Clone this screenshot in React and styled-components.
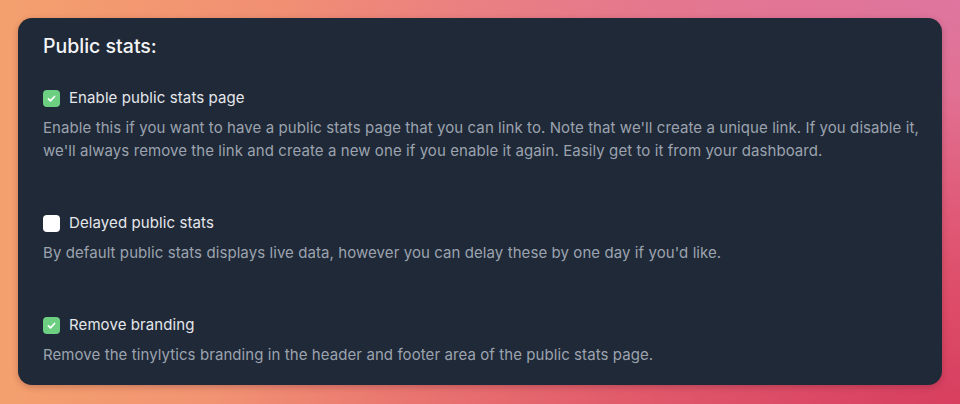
import React, { useState } from "react";
import styled, { createGlobalStyle } from "styled-components";

const GlobalStyle = createGlobalStyle`
  html, body {
    margin: 0;
    padding: 0;
  }
  body {
    font-family: Inter, "Noto Sans", sans-serif;
    background:
      radial-gradient(ellipse at 100% 100%, rgba(214, 58, 92, 0.9), rgba(214, 58, 92, 0) 55%),
      radial-gradient(ellipse at 100% 0%, rgba(222, 118, 160, 0.95), rgba(222, 118, 160, 0) 50%),
      linear-gradient(90deg, #f4a06e 0%, #ef8676 45%, #e7687e 100%);
    min-height: 404px;
  }
`;

const Page = styled.div`
  padding: 18px 18px 19px 18px;
`;

const Card = styled.section`
  background: #1f2937;
  border-radius: 14px;
  padding: 14px 18px 19px 25px;
  box-shadow: 0 2px 6px rgba(60, 20, 30, 0.25);
`;

const Title = styled.h2`
  margin: 0;
  color: #f3f4f6;
  font-size: 19.5px;
  font-weight: 550;
  line-height: 28px;
`;

const List = styled.div`
  display: flex;
  flex-direction: column;
  gap: 49px;
  margin-top: 26px;
`;

const Option = styled.div`
  display: flex;
  flex-direction: column;
  gap: 6px;
`;

const Label = styled.label`
  display: flex;
  align-items: center;
  gap: 9px;
  color: #e5e7eb;
  font-size: 15px;
  letter-spacing: 0.1px;
  line-height: 24px;
  cursor: pointer;
`;

const Box = styled.span`
  width: 17px;
  height: 17px;
  border-radius: 4px;
  background: ${(p) => (p.$checked ? "#6ccf82" : "#ffffff")};
  display: flex;
  align-items: center;
  justify-content: center;
  flex-shrink: 0;
`;

const Description = styled.p`
  margin: 0;
  color: #9ca3af;
  font-size: 15px;
  letter-spacing: 0.08px;
  line-height: 23px;
`;

const Check = () => (
  <svg width="11" height="11" viewBox="0 0 16 16" fill="none">
    <path
      d="M3.5 8.5l3 3 6-6.5"
      stroke="#ffffff"
      strokeWidth="2.4"
      strokeLinecap="round"
      strokeLinejoin="round"
    />
  </svg>
);

const options = [
  {
    id: "public",
    label: "Enable public stats page",
    checked: true,
    text: "Enable this if you want to have a public stats page that you can link to. Note that we'll create a unique link. If you disable it, we'll always remove the link and create a new one if you enable it again. Easily get to it from your dashboard.",
  },
  {
    id: "delayed",
    label: "Delayed public stats",
    checked: false,
    text: "By default public stats displays live data, however you can delay these by one day if you'd like.",
  },
  {
    id: "branding",
    label: "Remove branding",
    checked: true,
    text: "Remove the tinylytics branding in the header and footer area of the public stats page.",
  },
];

const App = () => {
  const [state, setState] = useState(
    Object.fromEntries(options.map((o) => [o.id, o.checked]))
  );

  return (
    <>
      <GlobalStyle />
      <Page>
        <Card>
          <Title>Public stats:</Title>
          <List>
            {options.map((o) => (
              <Option key={o.id}>
                <Label
                  onClick={() => setState({ ...state, [o.id]: !state[o.id] })}
                >
                  <Box $checked={state[o.id]}>{state[o.id] && <Check />}</Box>
                  {o.label}
                </Label>
                <Description>{o.text}</Description>
              </Option>
            ))}
          </List>
        </Card>
      </Page>
    </>
  );
};

export default App;
